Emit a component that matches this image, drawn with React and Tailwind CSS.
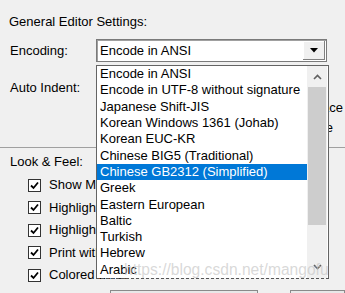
import React from "react";

const items = [
  "Encode in ANSI",
  "Encode in UTF-8 without signature",
  "Japanese Shift-JIS",
  "Korean Windows 1361 (Johab)",
  "Korean EUC-KR",
  "Chinese BIG5 (Traditional)",
  "Chinese GB2312 (Simplified)",
  "Greek",
  "Eastern European",
  "Baltic",
  "Turkish",
  "Hebrew",
  "Arabic",
];

const checks = [
  "Show Menu Bar",
  "Highlight current line",
  "Highlight matching braces",
  "Print with syntax highlighting",
  "Colored Lines",
];

function CheckBox() {
  return (
    <div className="w-[13px] h-[13px] bg-white border border-[#333] flex items-center justify-center shrink-0">
      <svg width="9" height="9" viewBox="0 0 9 9">
        <path d="M1 4.5 L3.5 7 L8 1.5" fill="none" stroke="#000" strokeWidth="1.8" />
      </svg>
    </div>
  );
}

export default function App() {
  return (
    <div className="w-[345px] h-[293px] bg-[#f0f0f0] relative overflow-hidden font-['Liberation_Sans',Arial,sans-serif] text-[13px] leading-[16px] text-black">
      <div className="pt-[14px] pl-[9px]">General Editor Settings:</div>

      <div className="mt-[9px] flex items-center pl-[10px]">
        <div className="w-[86px]">Encoding:</div>
        <div className="w-[231px] h-[23px] bg-white border border-[#7a7a7a] shadow-[inset_1px_1px_0_#a0a0a0] flex items-center">
          <div className="flex-1 pl-[3px]">Encode in ANSI</div>
          <div className="w-[22px] h-[19px] mr-[1px] bg-[#f0f0f0] border-r border-b border-[#808080] shadow-[inset_1px_1px_0_#ffffff] flex items-center justify-center">
            <svg width="8" height="5" viewBox="0 0 8 5">
              <path d="M0 0 H8 L4 4.5 Z" fill="#000" />
            </svg>
          </div>
        </div>
      </div>

      <div className="mt-[18px] flex pl-[10px] h-[60px]">
        <div>Auto Indent:</div>
        <div className="flex-1 flex flex-col items-end pt-[20px] gap-[4px]">
          <div className="pr-[2px]">Replace tab by space</div>
          <div className="pr-[12px]">Show indent guide</div>
        </div>
      </div>

      <div className="mt-[7px] border-t border-[#a0a0a0]" />

      <div className="mt-[6px] pl-[10px]">Look &amp; Feel:</div>

      <div className="mt-[4px] flex flex-col">
        {checks.map((c) => (
          <div key={c} className="h-[22.5px] flex items-center pl-[28px] whitespace-nowrap">
            <CheckBox />
            <span className="ml-[8px]">{c}</span>
          </div>
        ))}
      </div>

      <div className="mt-[3.5px] flex">
        <div className="ml-[110px] w-[160px] h-[20px] border border-[#8a8a8a] bg-[#e8e8e8]" />
        <div className="ml-[32px] w-[60px] h-[20px] border border-[#8a8a8a] bg-[#e8e8e8]" />
      </div>

      {/* dropdown list */}
      <div className="absolute left-[96px] top-[65px] w-[233px] bg-white border-l border-r border-t border-[#646464] flex">
        <div className="w-[210px] flex flex-col">
          {items.map((it, i) => (
            <div
              key={it}
              className={
                "h-[16.3px] flex items-center pl-[3px] whitespace-nowrap " +
                (i === 6 ? "bg-[#0078d7] text-white" : "")
              }
            >
              {it}
            </div>
          ))}
        </div>
        <div className="w-[20px] bg-[#f0f0f0] flex flex-col">
          <div className="h-[21px] flex items-center justify-center">
            <svg width="9" height="6" viewBox="0 0 9 6">
              <path d="M1 5 L4.5 1.5 L8 5" fill="none" stroke="#606060" strokeWidth="1.6" />
            </svg>
          </div>
          <div className="h-[138px] mx-[1px] bg-[#cdcdcd]" />
          <div className="flex-1" />
          <div className="h-[21px] flex items-center justify-center">
            <svg width="9" height="6" viewBox="0 0 9 6">
              <path d="M1 1 L4.5 4.5 L8 1" fill="none" stroke="#606060" strokeWidth="1.6" />
            </svg>
          </div>
        </div>
      </div>
      <div className="absolute left-[96px] top-[278px] w-[233px] border-t border-dashed border-[#555]" />

      {/* watermark */}
      <div className="absolute left-[124px] top-[261px] text-[15.6px] leading-[18px] text-[rgba(200,200,200,0.7)] whitespace-nowrap pointer-events-none">
        https://blog.csdn.net/mangofu
      </div>
    </div>
  );
}
